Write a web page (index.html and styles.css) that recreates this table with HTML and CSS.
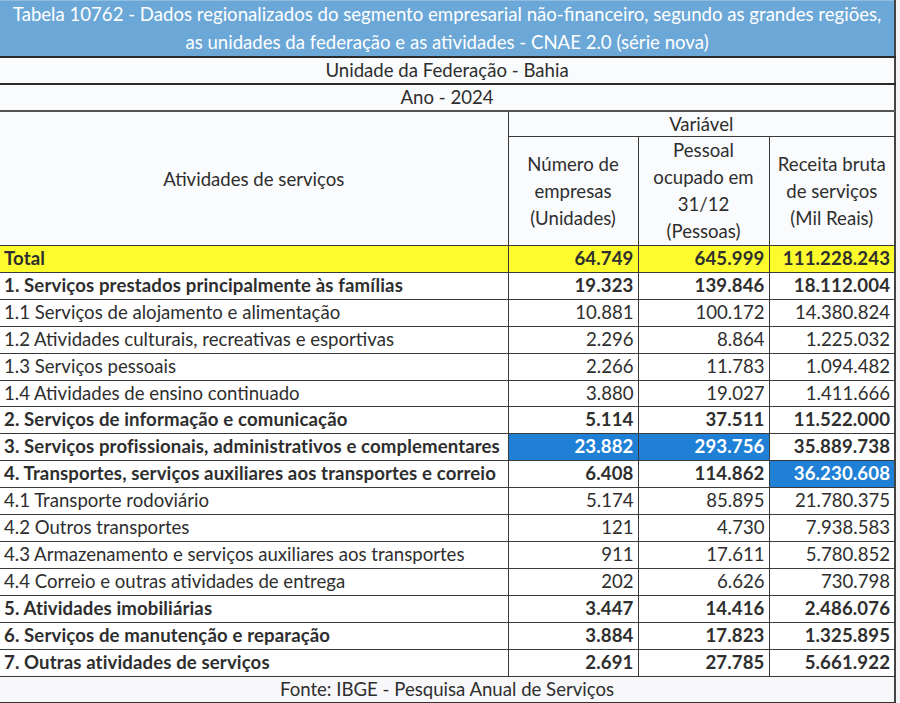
FILE: index.html
```html
<!DOCTYPE html>
<html lang="pt-BR">
<head>
<meta charset="utf-8">
<title>Tabela 10762</title>
<link rel="stylesheet" href="styles.css">
</head>
<body>
<table class="tbl">
  <colgroup>
    <col class="c-label">
    <col class="c-num1">
    <col class="c-num2">
    <col class="c-num3">
  </colgroup>
  <thead>
    <tr class="r-title"><th colspan="4">Tabela 10762 - Dados regionalizados do segmento empresarial não-financeiro, segundo as grandes regiões,<br>as unidades da federação e as atividades - CNAE 2.0 (série nova)</th></tr>
    <tr class="r-meta"><th colspan="4">Unidade da Federação - Bahia</th></tr>
    <tr class="r-meta r-meta-last"><th colspan="4">Ano - 2024</th></tr>
    <tr class="r-var"><th rowspan="2" class="h-act">Atividades de serviços</th><th colspan="3">Variável</th></tr>
    <tr class="r-sub">
      <th>Número de<br>empresas<br>(Unidades)</th>
      <th>Pessoal<br>ocupado em<br>31/12<br>(Pessoas)</th>
      <th>Receita bruta<br>de serviços<br>(Mil Reais)</th>
    </tr>
  </thead>
  <tbody>
    <tr class="total b"><td>Total</td><td>64.749</td><td>645.999</td><td>111.228.243</td></tr>
    <tr class="b"><td>1. Serviços prestados principalmente às famílias</td><td>19.323</td><td>139.846</td><td>18.112.004</td></tr>
    <tr><td>1.1 Serviços de alojamento e alimentação</td><td>10.881</td><td>100.172</td><td>14.380.824</td></tr>
    <tr><td>1.2 Atividades culturais, recreativas e esportivas</td><td>2.296</td><td>8.864</td><td>1.225.032</td></tr>
    <tr><td>1.3 Serviços pessoais</td><td>2.266</td><td>11.783</td><td>1.094.482</td></tr>
    <tr><td>1.4 Atividades de ensino continuado</td><td>3.880</td><td>19.027</td><td>1.411.666</td></tr>
    <tr class="b"><td>2. Serviços de informação e comunicação</td><td>5.114</td><td>37.511</td><td>11.522.000</td></tr>
    <tr class="b"><td>3. Serviços profissionais, administrativos e complementares</td><td class="hl">23.882</td><td class="hl">293.756</td><td>35.889.738</td></tr>
    <tr class="b"><td>4. Transportes, serviços auxiliares aos transportes e correio</td><td>6.408</td><td>114.862</td><td class="hl">36.230.608</td></tr>
    <tr><td>4.1 Transporte rodoviário</td><td>5.174</td><td>85.895</td><td>21.780.375</td></tr>
    <tr><td>4.2 Outros transportes</td><td>121</td><td>4.730</td><td>7.938.583</td></tr>
    <tr><td>4.3 Armazenamento e serviços auxiliares aos transportes</td><td>911</td><td>17.611</td><td>5.780.852</td></tr>
    <tr><td>4.4 Correio e outras atividades de entrega</td><td>202</td><td>6.626</td><td>730.798</td></tr>
    <tr class="b"><td>5. Atividades imobiliárias</td><td>3.447</td><td>14.416</td><td>2.486.076</td></tr>
    <tr class="b"><td>6. Serviços de manutenção e reparação</td><td>3.884</td><td>17.823</td><td>1.325.895</td></tr>
    <tr class="b"><td>7. Outras atividades de serviços</td><td>2.691</td><td>27.785</td><td>5.661.922</td></tr>
  </tbody>
  <tfoot>
    <tr class="r-foot"><td colspan="4">Fonte: IBGE - Pesquisa Anual de Serviços</td></tr>
  </tfoot>
</table>
</body>
</html>
```

FILE: styles.css
```css
html, body {
  margin: 0;
  padding: 0;
  background: #f4f4f6;
}

.tbl {
  width: 895px;
  border-collapse: collapse;
  table-layout: fixed;
  font-family: Lato, "Open Sans", sans-serif;
  font-size: 18.6px;
  color: #2e2e2e;
  background: #ffffff;
}

.c-label { width: 508px; }
.c-num1 { width: 130px; }
.c-num2 { width: 131px; }
.c-num3 { width: 126px; }

.tbl th,
.tbl td {
  border: 1px solid #3a3a3a;
  padding: 0 4px;
  height: 25px;
  line-height: 25px;
  white-space: nowrap;
}

.tbl th {
  font-weight: normal;
  text-align: center;
  background: #fafbfd;
}

.r-title th {
  background: #6ba7d7;
  color: #ffffff;
  line-height: 27.5px;
  height: 55px;
  border-top: 1px solid #8fbde2;
  border-left: none;
  border-right: 2px solid #444;
  border-bottom: 2px solid #2a2a2a;
}

.r-meta th {
  border-bottom: 2px solid #2a2a2a;
}

.r-meta-last th {
  border-bottom: 2px solid #555;
}

.r-var th {
  height: 24px;
  line-height: 24px;
}

.r-sub th {
  height: 105px;
  line-height: 27px;
  vertical-align: middle;
}

.h-act {
  vertical-align: middle;
}

.tbl td {
  text-align: right;
  height: 25.9px;
  line-height: 25.9px;
}

.tbl td:first-child {
  text-align: left;
  padding-left: 4px;
}

.b td {
  font-weight: bold;
  letter-spacing: 0.12px;
}

.total td {
  background: #fbfb2e;
}

.tbl td.hl {
  background: #2080d6;
  color: #ffffff;
}

.r-foot td {
  text-align: center !important;
  background: #f8f8fa;
  font-weight: normal;
  border-bottom: 2px solid #333;
}

.tbl th:first-child,
.tbl td:first-child {
  border-left: none;
}

.tbl th:last-child,
.tbl td:last-child {
  border-right: 2px solid #444;
}
```
